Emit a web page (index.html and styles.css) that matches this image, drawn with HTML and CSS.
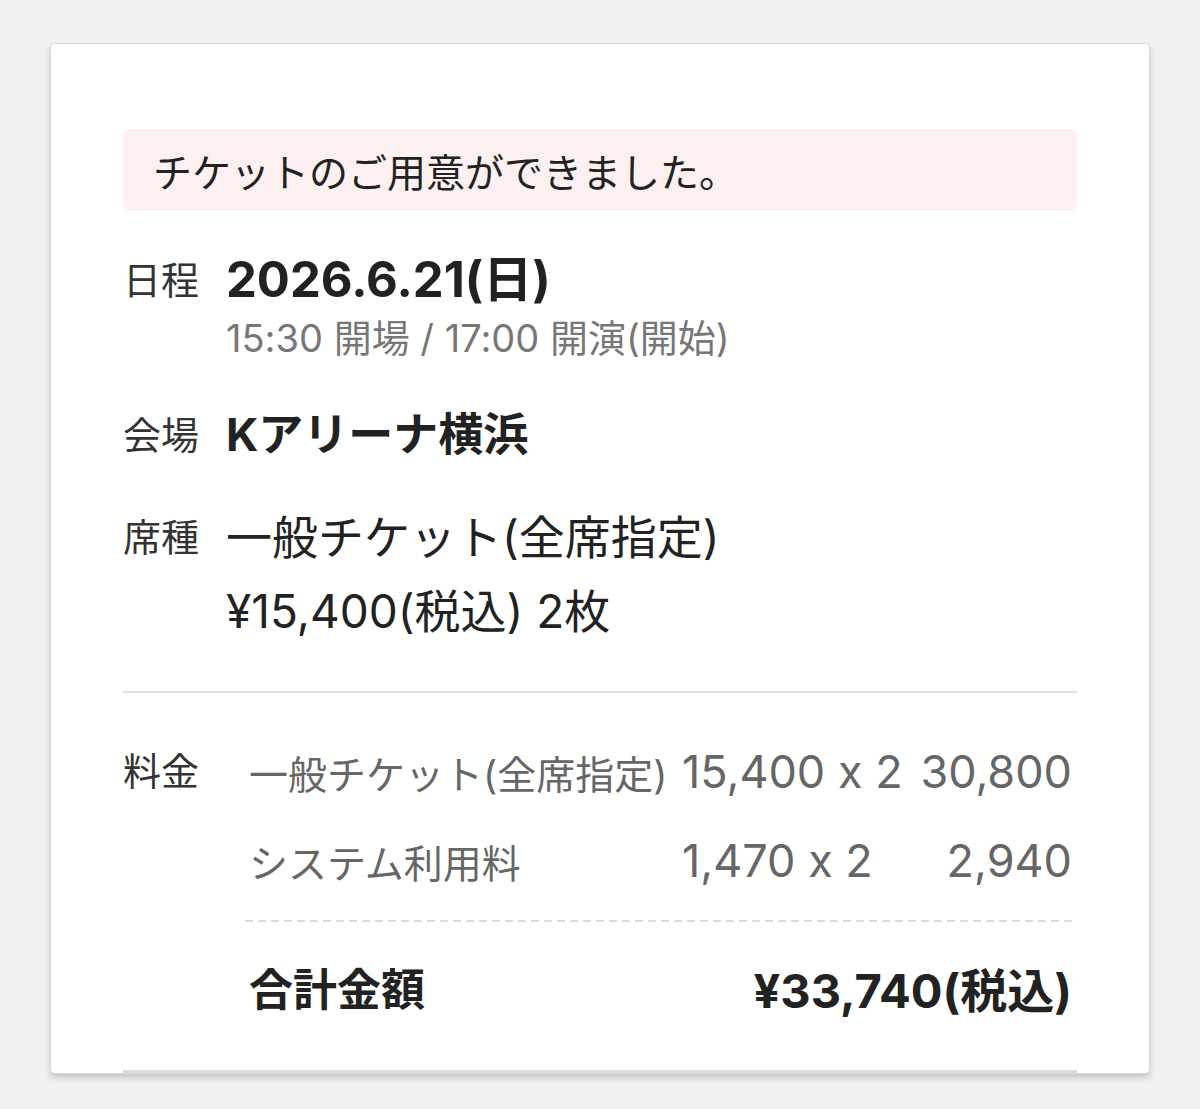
FILE: index.html
```html
<!DOCTYPE html>
<html lang="ja">
<head>
<meta charset="utf-8">
<title>チケット</title>
<link rel="stylesheet" href="styles.css">
</head>
<body>
<main class="page">
  <section class="card">
    <div class="notice">チケットのご用意ができました。</div>
    <dl class="details">
      <div class="row row-date">
        <dt class="label">日程</dt>
        <dd class="value">
          <div class="date">2026.6.21(日)</div>
          <div class="time">15:30 開場 / 17:00 開演(開始)</div>
        </dd>
      </div>
      <div class="row row-venue">
        <dt class="label">会場</dt>
        <dd class="value"><div class="venue">Kアリーナ横浜</div></dd>
      </div>
      <div class="row row-seat">
        <dt class="label">席種</dt>
        <dd class="value seat">
          <div>一般チケット(全席指定)</div>
          <div>¥15,400(税込) 2枚</div>
        </dd>
      </div>
    </dl>
    <div class="divider"></div>
    <div class="fees">
      <div class="fees-label">料金</div>
      <div class="fees-body">
        <div class="fee-table">
          <div class="fee-name">一般チケット(全席指定)</div>
          <div class="fee-qty">15,400 x 2</div>
          <div class="fee-amount">30,800</div>
          <div class="fee-name">システム利用料</div>
          <div class="fee-qty">1,470 x 2</div>
          <div class="fee-amount">2,940</div>
        </div>
        <div class="dash"></div>
        <div class="total">
          <span class="total-label">合計金額</span>
          <span class="total-value">¥33,740(税込)</span>
        </div>
      </div>
    </div>
    <div class="card-foot"></div>
  </section>
</main>
</body>
</html>
```

FILE: styles.css
```css
* { box-sizing: border-box; }
html, body { margin: 0; padding: 0; }
body {
  background: #f0f1f3;
  font-family: "Inter", "Noto Sans CJK JP", sans-serif;
  font-feature-settings: "calt" 0;
  color: #222;
}
.page {
  padding: 43px 50px 0;
  height: 1109px;
  overflow: hidden;
}
.card {
  width: 1100px;
  background: #fff;
  border: 1px solid #d8d8d8;
  border-radius: 5px;
  box-shadow: 0 4px 6px rgba(0, 0, 0, 0.18);
  padding: 85px 72px 0;
}
.notice {
  height: 82px;
  display: flex;
  align-items: center;
  padding-left: 30px;
  background: #fcf0f0;
  border-radius: 8px;
  font-size: 39px;
  color: #222;
}
.details { margin: 0; }
.row {
  display: grid;
  grid-template-columns: 103px 1fr;
  margin: 0;
}
.label {
  margin: 0;
  font-size: 38px;
  color: #333;
}
.value { margin: 0; }
.row-date { margin-top: 41px; }
.row-date .label { line-height: 56px; }
.date {
  font-size: 49px;
  font-weight: 700;
  line-height: 56px;
}
.time {
  margin-top: 8px;
  font-size: 38px;
  line-height: 44px;
  color: #777;
}
.row-venue { margin-top: 47px; }
.row-venue .label { line-height: 56px; }
.venue {
  font-size: 45px;
  font-weight: 700;
  line-height: 56px;
}
.row-seat { margin-top: 37px; }
.row-seat .label { line-height: 74px; }
.seat {
  font-size: 46px;
  line-height: 74px;
  color: #222;
}
.divider {
  margin-top: 43px;
  height: 2px;
  background: #dedede;
}
.fees {
  display: grid;
  grid-template-columns: 122px 1fr;
  margin-top: 34px;
}
.fees-label {
  font-size: 38px;
  line-height: 89px;
  color: #333;
}
.fee-table {
  display: grid;
  grid-template-columns: 437px 1fr auto;
  grid-auto-rows: 89px;
  align-items: center;
  color: #666;
}
.fee-name { font-size: 39px; padding-left: 4px; }
.fee-qty { font-size: 45px; }
.fee-amount { font-size: 45px; text-align: right; padding-right: 5px; }
.dash {
  margin-top: 15px;
  height: 2px;
  background: repeating-linear-gradient(90deg, #dcdcdc 0 8px, transparent 8px 13px);
}
.total {
  height: 130px;
  display: flex;
  align-items: center;
  justify-content: space-between;
  padding: 0 5px 0 4px;
  font-weight: 700;
  color: #222;
}
.total-label { font-size: 44px; }
.total-value { font-size: 47px; }
.card-foot {
  margin-top: 18px;
  height: 3px;
  background: #dcdcdc;
}
```
